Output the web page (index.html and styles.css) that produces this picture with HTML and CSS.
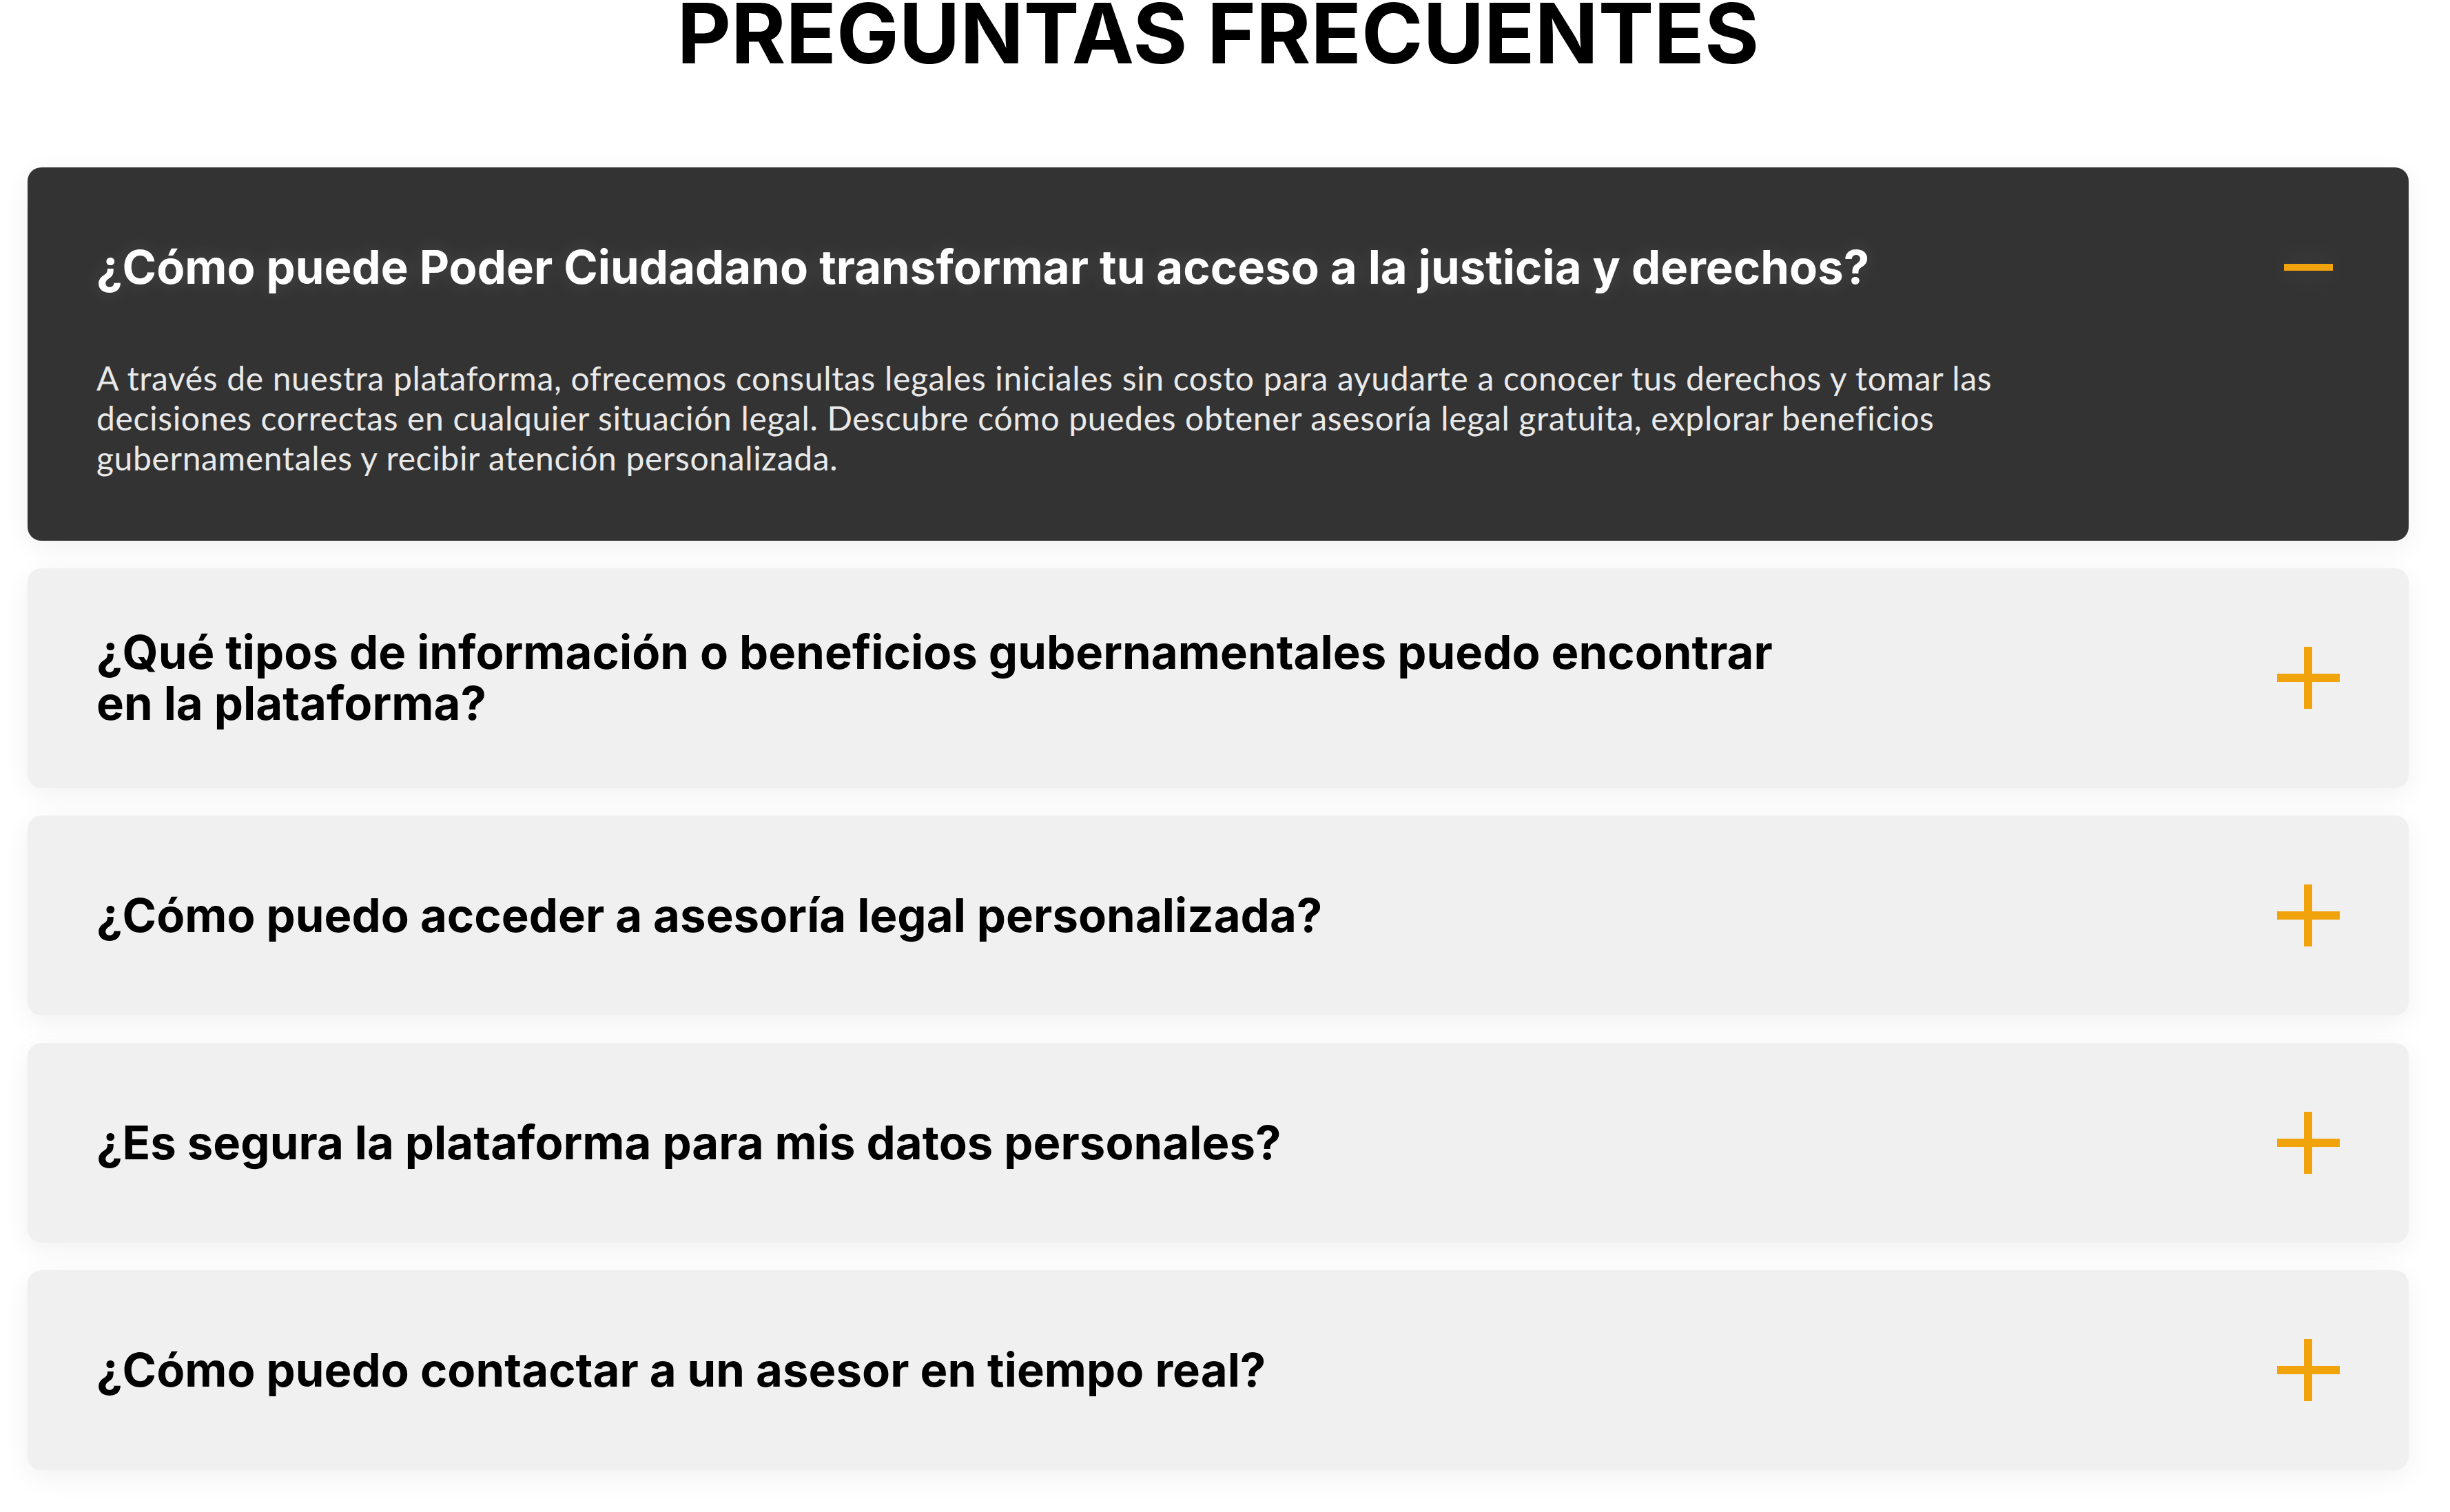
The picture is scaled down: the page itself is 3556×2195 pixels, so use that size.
FILE: index.html
```html
<!DOCTYPE html>
<html lang="es">
<head>
<meta charset="utf-8">
<title>Preguntas frecuentes</title>
<link rel="stylesheet" href="styles.css">
</head>
<body>
<main class="faq-section">
  <h1 class="faq-title">PREGUNTAS FRECUENTES</h1>
  <div class="faq-list">
    <article class="faq-item is-open">
      <div class="faq-head">
        <h2 class="faq-question">¿Cómo puede Poder Ciudadano transformar tu acceso a la justicia y derechos?</h2>
        <span class="faq-icon">
          <svg viewBox="0 0 90 90" width="90" height="90"><rect x="10" y="40" width="71" height="10" fill="#f1a30b"/></svg>
        </span>
      </div>
      <p class="faq-answer">A través de nuestra plataforma, ofrecemos consultas legales iniciales sin costo para ayudarte a conocer tus derechos y tomar las<br>decisiones correctas en cualquier situación legal. Descubre cómo puedes obtener asesoría legal gratuita, explorar beneficios<br>gubernamentales y recibir atención personalizada.</p>
    </article>
    <article class="faq-item">
      <div class="faq-head">
        <h2 class="faq-question">¿Qué tipos de información o beneficios gubernamentales puedo encontrar<br>en la plataforma?</h2>
        <span class="faq-icon">
          <svg viewBox="0 0 91 90" width="91" height="90"><rect x="0" y="39" width="91" height="12" fill="#f1a30b"/><rect x="39" y="0" width="12" height="90" fill="#f1a30b"/></svg>
        </span>
      </div>
    </article>
    <article class="faq-item">
      <div class="faq-head">
        <h2 class="faq-question">¿Cómo puedo acceder a asesoría legal personalizada?</h2>
        <span class="faq-icon">
          <svg viewBox="0 0 91 90" width="91" height="90"><rect x="0" y="39" width="91" height="12" fill="#f1a30b"/><rect x="39" y="0" width="12" height="90" fill="#f1a30b"/></svg>
        </span>
      </div>
    </article>
    <article class="faq-item">
      <div class="faq-head">
        <h2 class="faq-question">¿Es segura la plataforma para mis datos personales?</h2>
        <span class="faq-icon">
          <svg viewBox="0 0 91 90" width="91" height="90"><rect x="0" y="39" width="91" height="12" fill="#f1a30b"/><rect x="39" y="0" width="12" height="90" fill="#f1a30b"/></svg>
        </span>
      </div>
    </article>
    <article class="faq-item">
      <div class="faq-head">
        <h2 class="faq-question">¿Cómo puedo contactar a un asesor en tiempo real?</h2>
        <span class="faq-icon">
          <svg viewBox="0 0 91 90" width="91" height="90"><rect x="0" y="39" width="91" height="12" fill="#f1a30b"/><rect x="39" y="0" width="12" height="90" fill="#f1a30b"/></svg>
        </span>
      </div>
    </article>
  </div>
</main>
</body>
</html>
```
FILE: styles.css
```css
html, body {
  margin: 0;
  padding: 0;
  background: #ffffff;
}

.faq-section {
  width: 3456px;
  margin-left: 40px;
  padding-bottom: 60px;
}

.faq-title {
  font-family: Inter, "Liberation Sans", sans-serif;
  font-weight: 700;
  font-size: 121px;
  line-height: 0.8;
  text-align: center;
  color: #000000;
  margin: 0 0 146px;
}

.faq-list {
  display: flex;
  flex-direction: column;
  gap: 40px;
}

.faq-item {
  background: #f0f0f0;
  border-radius: 20px;
  padding: 85px 100px;
  box-shadow: 0 10px 40px rgba(0, 0, 0, 0.06);
}

.faq-item.is-open {
  background: #333333;
  padding-bottom: 91px;
}

.faq-head {
  display: flex;
  align-items: center;
  justify-content: space-between;
  min-height: 120px;
  gap: 40px;
}

.faq-question {
  margin: 0;
  font-family: Inter, "Liberation Sans", sans-serif;
  font-weight: 700;
  font-size: 67px;
  letter-spacing: 0.05px;
  line-height: 74.5px;
  color: #000000;
}

.is-open .faq-question {
  color: #ffffff;
  text-shadow: 0 0 30px rgba(255, 255, 255, 0.12);
}

.faq-icon {
  flex: none;
  width: 91px;
  height: 90px;
  display: flex;
}

.is-open .faq-icon {
  filter: drop-shadow(0 0 24px rgba(255, 255, 255, 0.12));
}

.faq-answer {
  margin: 72px 0 0;
  font-family: Lato, "Liberation Sans", sans-serif;
  font-size: 48px;
  letter-spacing: 0.65px;
  line-height: 58px;
  color: #e9e9e9;
}
```
